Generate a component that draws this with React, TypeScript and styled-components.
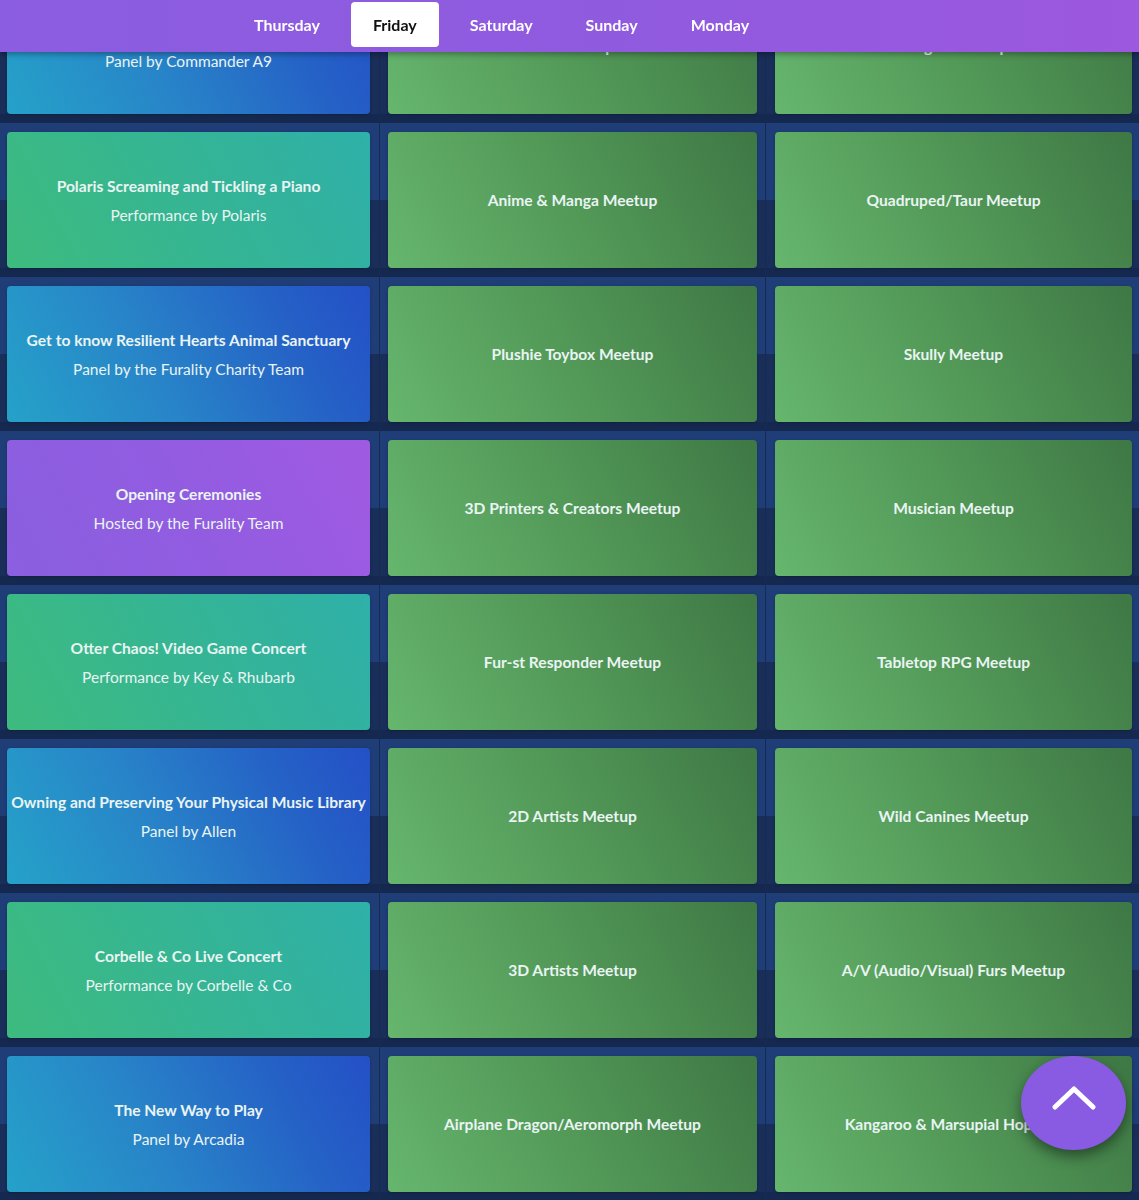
import React from 'react';
import styled, { createGlobalStyle, css } from 'styled-components';

type Kind = 'panel' | 'performance' | 'meetup' | 'ceremony';

interface Session {
  title: string;
  host?: string;
  kind: Kind;
}

const GlobalStyle = createGlobalStyle`
  html, body {
    margin: 0;
    padding: 0;
    background: #182d58;
    overflow: hidden;
    font-family: Lato, 'Open Sans', 'Liberation Sans', sans-serif;
  }
`;

const gradients: Record<Kind, ReturnType<typeof css>> = {
  panel: css`background: linear-gradient(62deg, #25a2c9 0%, #2884c8 40%, #2562c6 75%, #2450c7 100%);`,
  performance: css`background: linear-gradient(62deg, #3ebb7e 0%, #35b593 50%, #2fb0a9 100%);`,
  meetup: css`background: linear-gradient(62deg, #66b66e 0%, #529857 50%, #3e7845 100%);`,
  ceremony: css`background: linear-gradient(62deg, #8a5fe0 0%, #925ce1 50%, #a05ae2 100%);`,
};

const NavBar = styled.nav`
  position: fixed;
  top: 0;
  left: 0;
  right: 0;
  height: 52px;
  box-sizing: border-box;
  padding: 2px 0 0 232px;
  display: flex;
  align-items: flex-start;
  gap: 9px;
  background: linear-gradient(90deg, #8b5de0 0%, #915adf 60%, #9c58df 100%);
  box-shadow: 0 2px 6px rgba(0, 0, 0, 0.35);
  z-index: 10;
`;

const DayTab = styled.div<{ $active?: boolean }>`
  height: 45px;
  padding: 0 22px;
  display: flex;
  align-items: center;
  border-radius: 4px;
  font-size: 16px;
  font-weight: 700;
  color: ${p => (p.$active ? '#111' : '#fff')};
  background: ${p => (p.$active ? '#fff' : 'transparent')};
`;

const Schedule = styled.main`
  margin-top: -31px;
  display: flex;
  flex-direction: column;
`;

const TimeSlot = styled.section`
  display: grid;
  grid-template-columns: 380px 386px 1fr;
  height: 154px;
  background: linear-gradient(
    to bottom,
    #1f3e77 0,
    #1f3e77 77px,
    #192e59 77px,
    #192e59 145px,
    #152950 145px
  );
`;

const Cell = styled.div`
  padding: 9px 8px;
  border-right: 1px solid #162b52;

  &:nth-child(1) {
    padding-left: 7px;
    padding-right: 9px;
  }
  &:nth-child(3) {
    padding-left: 9px;
    padding-right: 7px;
    border-right: none;
  }
`;

const Card = styled.div<{ $kind: Kind }>`
  height: 136px;
  border-radius: 4px;
  display: flex;
  flex-direction: column;
  align-items: center;
  justify-content: center;
  text-align: center;
  color: #e9f4f3;
  box-shadow: 0 1px 3px rgba(0, 0, 0, 0.25);
  ${p => gradients[p.$kind]}
`;

const Title = styled.div`
  font-size: 15.6px;
  font-weight: 700;
  line-height: 22px;
  white-space: nowrap;
`;

const Host = styled.div`
  font-size: 15.5px;
  font-weight: 400;
  line-height: 22px;
  margin-top: 7px;
`;

const ScrollTop = styled.button`
  position: fixed;
  right: 13px;
  bottom: 50px;
  width: 105px;
  height: 94px;
  border: none;
  border-radius: 50%;
  background: #885be2;
  box-shadow: 0 6px 14px rgba(0, 0, 0, 0.45);
  display: flex;
  align-items: center;
  justify-content: center;
  padding: 0 0 10px;
  z-index: 5;
`;

const days = ['Thursday', 'Friday', 'Saturday', 'Sunday', 'Monday'];

const slots: Session[][] = [
  [
    { title: 'Starship Tales', host: 'Panel by Commander A9', kind: 'panel' },
    { title: 'Fox Meetup', kind: 'meetup' },
    { title: 'Dragon Meetup', kind: 'meetup' },
  ],
  [
    { title: 'Polaris Screaming and Tickling a Piano', host: 'Performance by Polaris', kind: 'performance' },
    { title: 'Anime & Manga Meetup', kind: 'meetup' },
    { title: 'Quadruped/Taur Meetup', kind: 'meetup' },
  ],
  [
    { title: 'Get to know Resilient Hearts Animal Sanctuary', host: 'Panel by the Furality Charity Team', kind: 'panel' },
    { title: 'Plushie Toybox Meetup', kind: 'meetup' },
    { title: 'Skully Meetup', kind: 'meetup' },
  ],
  [
    { title: 'Opening Ceremonies', host: 'Hosted by the Furality Team', kind: 'ceremony' },
    { title: '3D Printers & Creators Meetup', kind: 'meetup' },
    { title: 'Musician Meetup', kind: 'meetup' },
  ],
  [
    { title: 'Otter Chaos! Video Game Concert', host: 'Performance by Key & Rhubarb', kind: 'performance' },
    { title: 'Fur-st Responder Meetup', kind: 'meetup' },
    { title: 'Tabletop RPG Meetup', kind: 'meetup' },
  ],
  [
    { title: 'Owning and Preserving Your Physical Music Library', host: 'Panel by Allen', kind: 'panel' },
    { title: '2D Artists Meetup', kind: 'meetup' },
    { title: 'Wild Canines Meetup', kind: 'meetup' },
  ],
  [
    { title: 'Corbelle & Co Live Concert', host: 'Performance by Corbelle & Co', kind: 'performance' },
    { title: '3D Artists Meetup', kind: 'meetup' },
    { title: 'A/V (Audio/Visual) Furs Meetup', kind: 'meetup' },
  ],
  [
    { title: 'The New Way to Play', host: 'Panel by Arcadia', kind: 'panel' },
    { title: 'Airplane Dragon/Aeromorph Meetup', kind: 'meetup' },
    { title: 'Kangaroo & Marsupial Hoppers', kind: 'meetup' },
  ],
];

const App: React.FC = () => {
  return (
    <>
      <GlobalStyle />
      <NavBar>
        {days.map(day => (
          <DayTab key={day} $active={day === 'Friday'}>
            {day}
          </DayTab>
        ))}
      </NavBar>
      <Schedule>
        {slots.map((row, i) => (
          <TimeSlot key={i}>
            {row.map(session => (
              <Cell key={session.title}>
                <Card $kind={session.kind}>
                  <Title>{session.title}</Title>
                  {session.host && <Host>{session.host}</Host>}
                </Card>
              </Cell>
            ))}
          </TimeSlot>
        ))}
      </Schedule>
      <ScrollTop aria-label="Back to top">
        <svg width="44" height="26" viewBox="0 0 44 26" fill="none">
          <path d="M3 22 L22 4 L41 22" stroke="#fff" strokeWidth="5" strokeLinecap="round" strokeLinejoin="round" />
        </svg>
      </ScrollTop>
    </>
  );
};

export default App;
